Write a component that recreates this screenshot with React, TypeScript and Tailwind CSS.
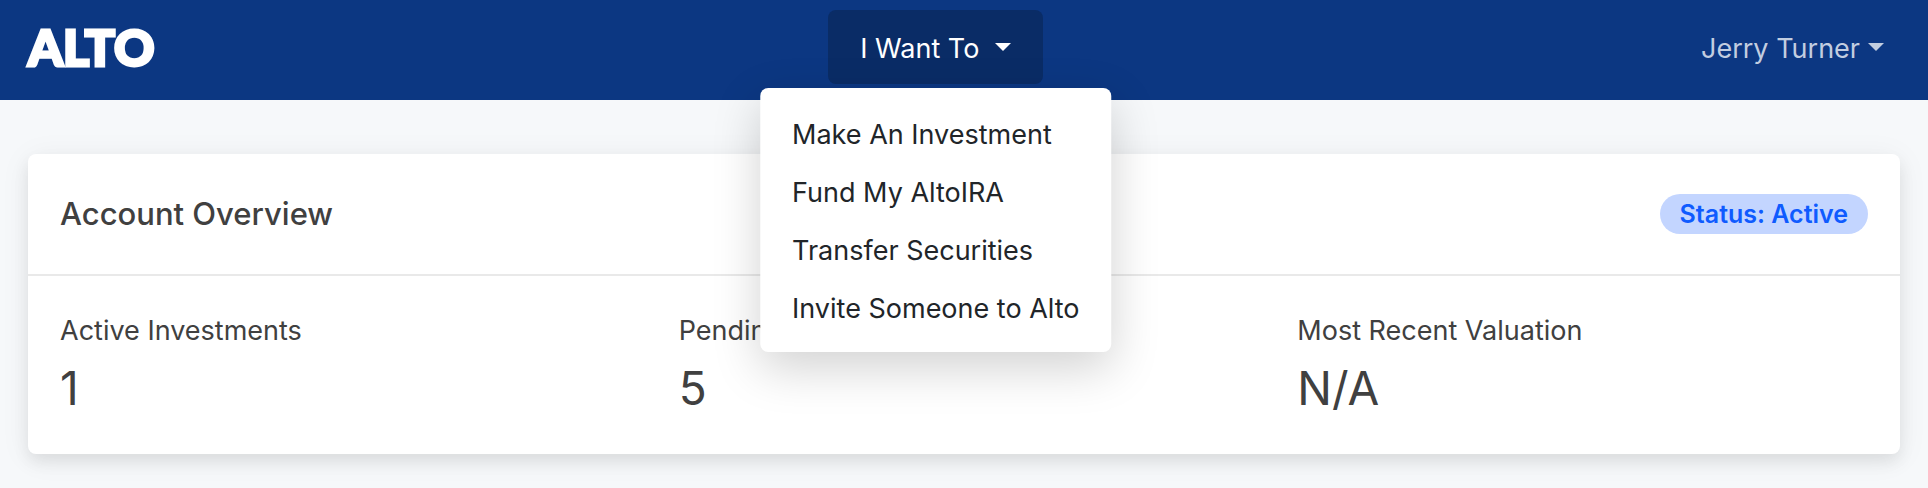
import { useState } from 'react'

const actions = ['Make An Investment', 'Fund My AltoIRA', 'Transfer Securities', 'Invite Someone to Alto']

const stats = [
  { label: 'Active Investments', value: '1' },
  { label: 'Pending Investments', value: '5' },
  { label: 'Most Recent Valuation', value: 'N/A' },
]

function Caret() {
  return (
    <svg viewBox="0 0 16 8" className="mb-1 h-2 w-4 fill-current" aria-hidden="true">
      <path d="M0 0h16L8 8z" />
    </svg>
  )
}

function ActionsMenu() {
  const [open, setOpen] = useState(true)

  return (
    <div className="relative">
      <button
        type="button"
        aria-expanded={open}
        onClick={() => setOpen(!open)}
        className="flex items-center gap-4 rounded-lg bg-[#0a2c66] px-8 pt-[18px] pb-3.5 text-[27px] leading-[42px] text-white"
      >
        I Want To
        <Caret />
      </button>
      {open && (
        <ul className="absolute top-full left-1/2 z-10 mt-1 -translate-x-1/2 rounded-lg bg-white pt-[18px] pb-3.5 text-[#212529] shadow-[0_16px_48px_rgba(0,0,0,0.18)]">
          {actions.map((action) => (
            <li key={action}>
              <a href="#" className="block px-8 py-2 text-[27px] leading-[42px] whitespace-nowrap">
                {action}
              </a>
            </li>
          ))}
        </ul>
      )}
    </div>
  )
}

function Navbar() {
  return (
    <nav className="flex items-center justify-between bg-[#0c3782] px-7 pt-2.5 pb-4">
      <a
        href="#"
        className="mr-8 font-[Lato,sans-serif] text-[50px] leading-[74px] font-black text-white [-webkit-text-stroke:3px_white]"
      >
        ALTO
      </a>
      <ActionsMenu />
      <button
        type="button"
        className="flex items-center gap-2 px-4 pt-[18px] pb-3.5 text-[27px] leading-[42px] text-[#c2cde0]"
      >
        Jerry Turner
        <Caret />
      </button>
    </nav>
  )
}

function AccountOverview() {
  return (
    <section className="rounded-lg bg-white text-[#404040] shadow-[0_8px_16px_rgba(0,0,0,0.08),0_4px_32px_rgba(0,0,0,0.06)]">
      <header className="flex items-center justify-between border-b-2 border-[#e9e9e9] px-8 py-10">
        <h1 className="text-[31px] leading-10 font-medium">Account Overview</h1>
        <span className="rounded-full bg-[#c3d5ff] px-5 text-[25px] leading-10 font-semibold text-[#0f5bff]">
          Status: Active
        </span>
      </header>
      <dl className="grid grid-cols-3 gap-12 px-8 pt-8 pb-8">
        {stats.map((stat) => (
          <div key={stat.label}>
            <dt className="text-[27px] leading-[46px]">{stat.label}</dt>
            <dd className="text-[46px] leading-[68px]">{stat.value}</dd>
          </div>
        ))}
      </dl>
    </section>
  )
}

export default function App() {
  return (
    <div className="min-h-screen bg-[#f6f8fa] font-[Inter,sans-serif]">
      <Navbar />
      <main className="px-7 pt-[54px] pb-8">
        <AccountOverview />
      </main>
    </div>
  )
}
